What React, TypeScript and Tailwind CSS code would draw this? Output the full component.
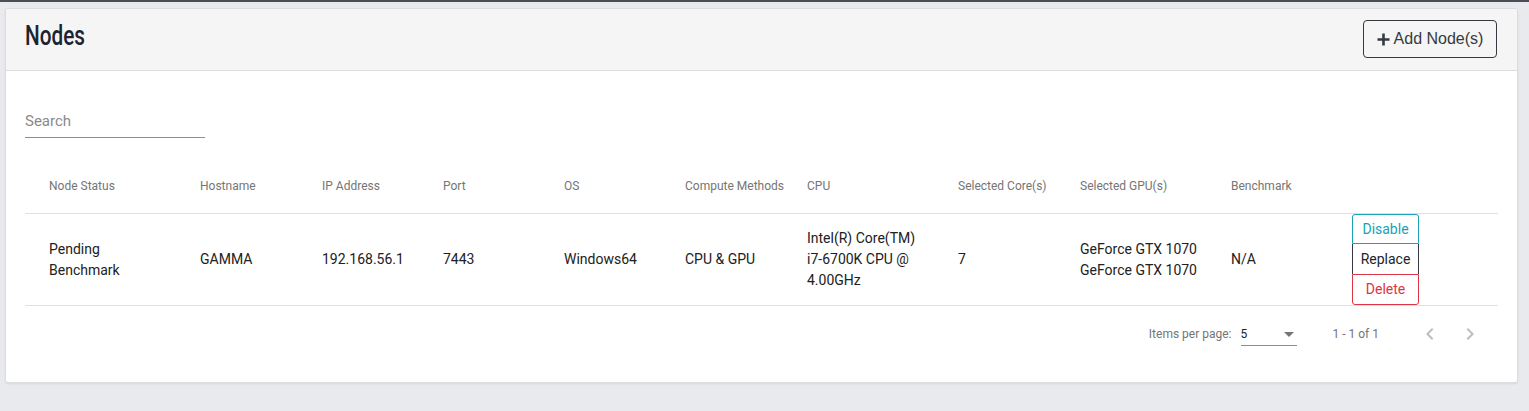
import React from "react";

const cols = "grid-cols-[175px_122px_121px_121px_121px_122px_151px_122px_151px_121px_1fr]";

const headers = [
  "Node Status",
  "Hostname",
  "IP Address",
  "Port",
  "OS",
  "Compute Methods",
  "CPU",
  "Selected Core(s)",
  "Selected GPU(s)",
  "Benchmark",
  "",
];

export default function App() {
  return (
    <div className="h-[411px] overflow-hidden w-[1529px] bg-[#e9eaee] pl-[5px] pr-[11px] font-['Roboto',sans-serif]">
      <div className="h-[2px] mb-[6px] -ml-[5px] w-[1529px] bg-[#4a4f57]" />
      <div className="bg-white rounded-[3px] border border-[#dcdde0] shadow-[0_1px_2px_rgba(0,0,0,0.08)] overflow-hidden">
        <div className="h-[62px] bg-[#f5f5f5] border-b border-[#dcdcdc] flex items-center justify-between pl-[19px] pr-[20px]">
          <h1 className="text-[28px] leading-none text-[#1d2330] font-medium scale-x-[0.74] origin-left -mt-[8px]">
            Nodes
          </h1>
          <button className="h-[38px] w-[134px] rounded-[4px] border border-[#343a40] text-[#343a40] text-[16px] flex items-center justify-center gap-[4px] font-['Liberation_Sans',sans-serif] -mt-[1px] ml-[1px]">
            <svg width="13" height="13" viewBox="0 0 13 13">
              <path d="M6.5 0.5v12M0.5 6.5h12" stroke="#343a40" strokeWidth="2.6" />
            </svg>
            Add Node(s)
          </button>
        </div>
        <div className="px-[19px]">
          <div className="pt-[40px]">
            <div className="w-[180px] border-b border-[#8e8e8e] pb-[6px] text-[15px] text-[#8a8a8a] leading-[20px]">
              Search
            </div>
          </div>
          <div className={`grid ${cols} mt-[20px] h-[56px] items-center border-b border-[#e0e0e0] text-[12px] text-[#757575]`}>
            {headers.map((h, i) => (
              <div key={i} className={i === 0 ? "pl-[24px]" : ""}>
                {h}
              </div>
            ))}
          </div>
          <div className={`grid ${cols} h-[92px] items-center border-b border-[#e0e0e0] text-[14px] text-[#212121] leading-[21px]`}>
            <div className="pl-[24px]">
              Pending
              <br />
              Benchmark
            </div>
            <div>GAMMA</div>
            <div>192.168.56.1</div>
            <div>7443</div>
            <div>Windows64</div>
            <div>CPU &amp; GPU</div>
            <div>
              Intel(R) Core(TM)
              <br />
              i7-6700K CPU @
              <br />
              4.00GHz
            </div>
            <div>7</div>
            <div>
              GeForce GTX 1070
              <br />
              GeForce GTX 1070
            </div>
            <div>N/A</div>
            <div className="flex flex-col self-stretch">
              <button className="h-[30px] w-[67px] border border-[#17a2b8] text-[#17a2b8] rounded-t-[3px]">Disable</button>
              <button className="h-[30px] w-[67px] border-x border-[#343a40] text-[#212529]">Replace</button>
              <button className="h-[31px] w-[67px] border border-[#dc3545] text-[#dc3545] rounded-b-[3px]">Delete</button>
            </div>
          </div>
          <div className="h-[56px] flex items-center justify-end text-[12px] text-[#757575] pr-[19px]">
            <span>Items per page:</span>
            <div className="ml-[9px] w-[56px] h-[20px] border-b border-[#8e8e8e] flex items-center justify-between mt-[4px]">
              <span className="text-[#212121] leading-none -mt-[3px]">5</span>
              <svg width="10" height="5" viewBox="0 0 10 5" className="mr-[3px] -mt-[2px]">
                <path d="M0 0h10L5 5z" fill="#757575" />
              </svg>
            </div>
            <span className="ml-[36px]">1 - 1 of 1</span>
            <div className="ml-[39px] flex items-center gap-[16px] mr-[-3px]">
              <svg width="24" height="24" viewBox="0 0 24 24">
                <path d="M15.4 7.4 14 6l-6 6 6 6 1.4-1.4L10.8 12z" fill="#bdbdbd" />
              </svg>
              <svg width="24" height="24" viewBox="0 0 24 24">
                <path d="M10 6 8.6 7.4 13.2 12l-4.6 4.6L10 18l6-6z" fill="#bdbdbd" />
              </svg>
            </div>
          </div>
          <div className="h-[20px]" />
        </div>
      </div>
    </div>
  );
}
